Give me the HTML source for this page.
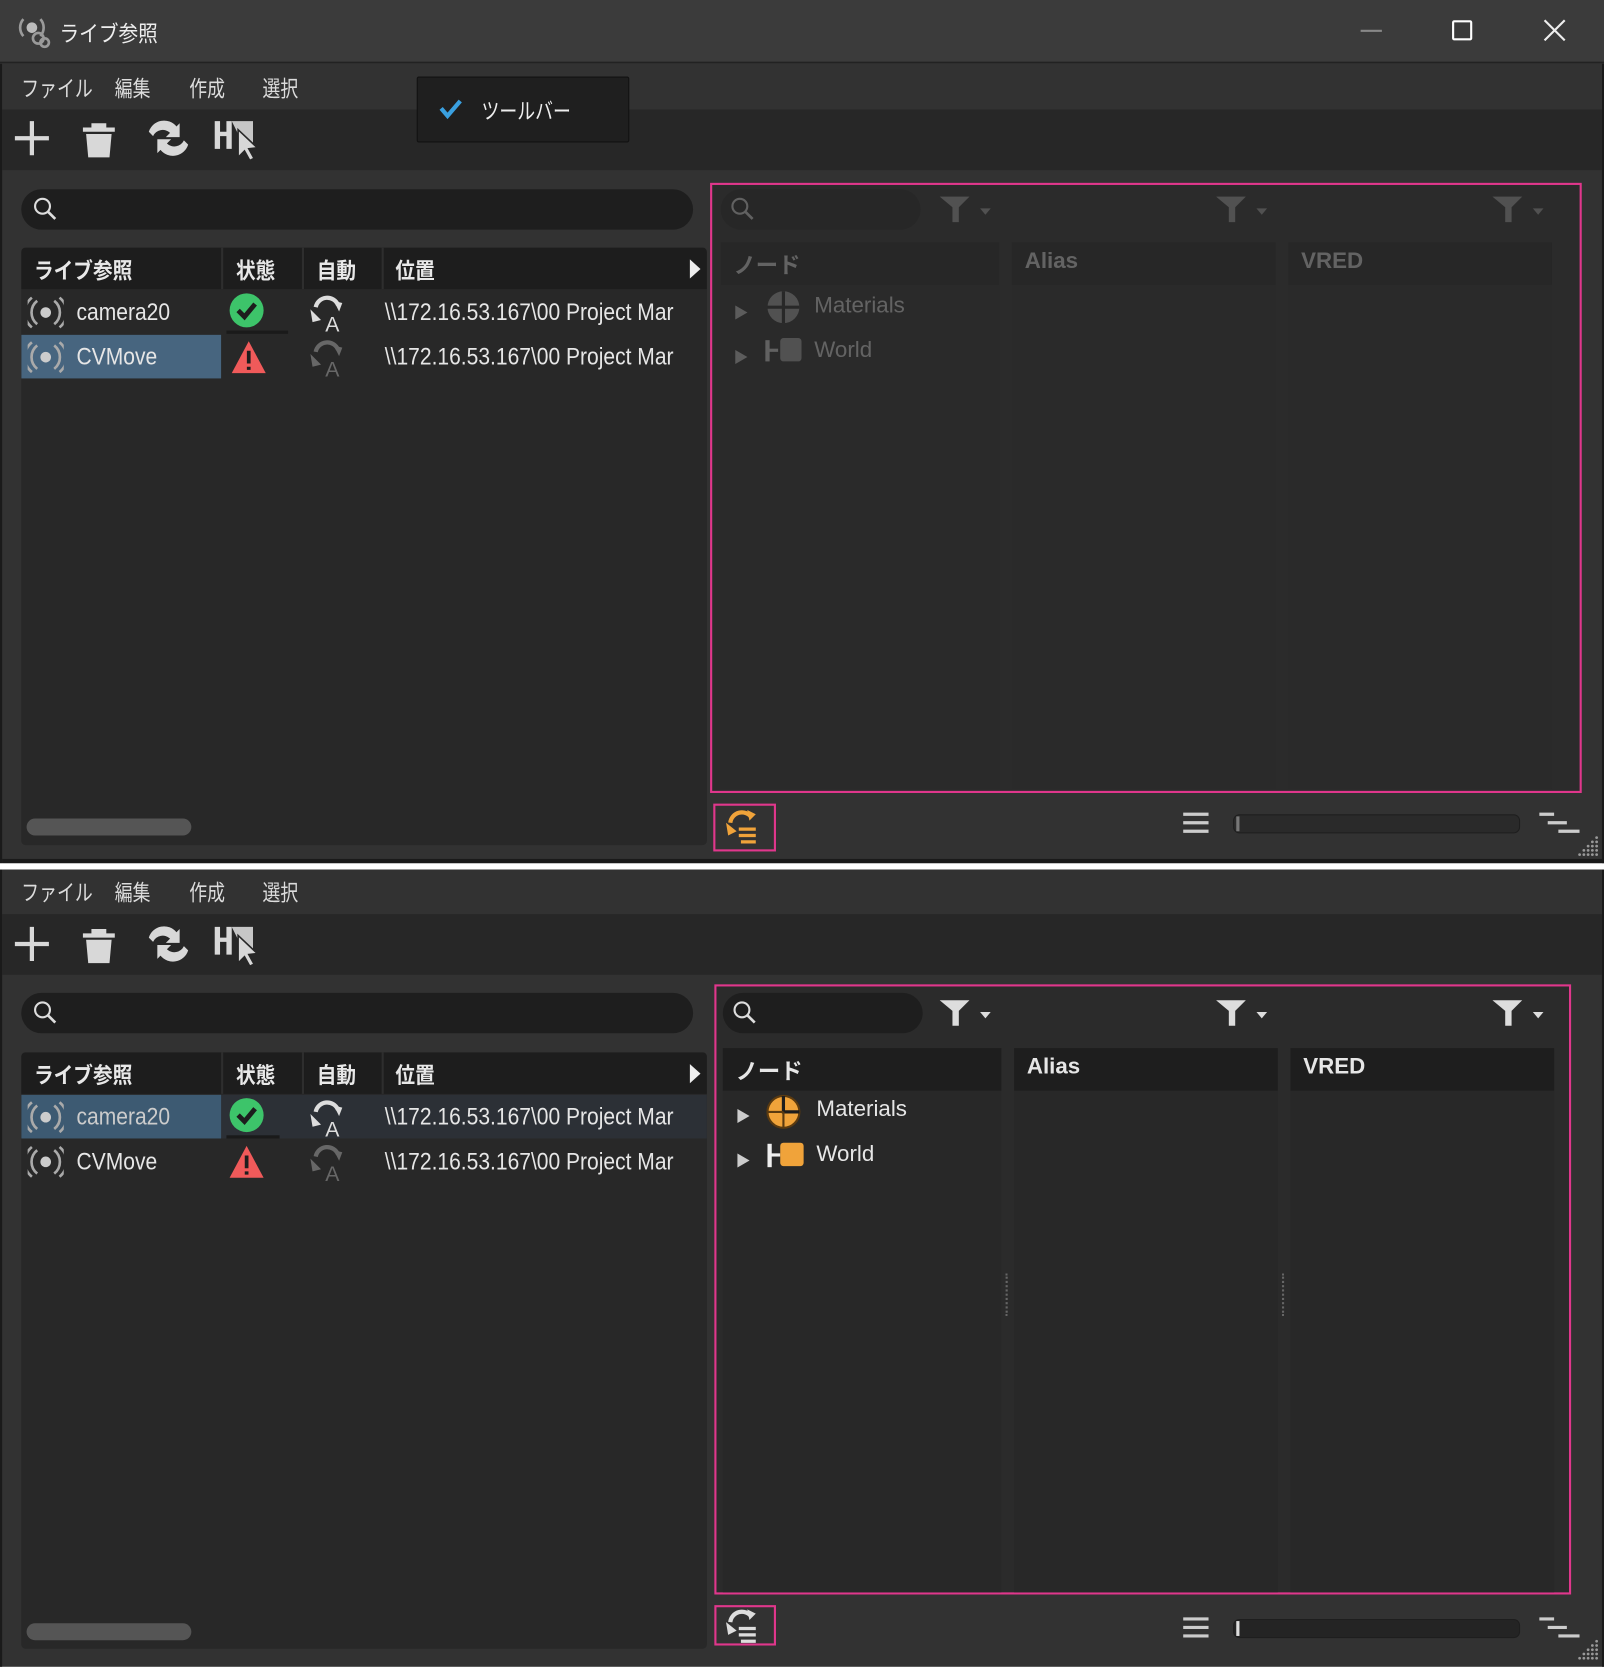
<!DOCTYPE html>
<html><head><meta charset="utf-8">
<style>
*{box-sizing:border-box;margin:0;padding:0}
html,body{width:1604px;height:1667px;overflow:hidden;background:#fff}
#s{position:absolute;left:0;top:0;width:1509px;height:1568px;transform:scale(1.063);transform-origin:0 0;font-family:"Liberation Sans","Noto Sans CJK JP",sans-serif;color:#e6e6e6;font-size:21px}
.a{position:absolute}
.win{position:absolute;left:0;width:1509px;background:#323232}
.menu{position:absolute;left:0;top:0;width:100%;height:43px;background:#323232}
.menu span{position:absolute;top:8px;font-size:21px;color:#dcdcdc;transform:scaleX(.8);transform-origin:0 0;white-space:nowrap}
.tool{position:absolute;left:0;top:43px;width:100%;height:57px;background:#272727}
.search{position:absolute;border-radius:19px;background:#1e1e1e}
.list{position:absolute;left:20px;top:173px;width:645px;height:562px;background:#282828;border-radius:4px;overflow:hidden}
.hdr{position:absolute;left:0;top:0;width:100%;height:39px;background:#1d1d1d}
.hdr span{position:absolute;top:6px;font-size:21px;font-weight:bold;color:#e8e8e8;transform:scaleX(.88);transform-origin:0 0;white-space:nowrap}
.hdr i{position:absolute;top:0;width:2px;height:39px;background:#2e2e2e}
.row{position:absolute;left:0;width:100%;height:41px}
.row .t{position:absolute;top:7px;font-size:23px;color:#e6e6e6;white-space:nowrap;transform:scaleX(.86);transform-origin:0 0}
.sb{position:absolute;left:5px;top:537px;width:155px;height:16px;border-radius:8px;background:#555}
.rb{position:absolute;border:2px solid #e0378c}
.col{position:absolute;background:#282828}
.ch{position:absolute;left:0;top:0;width:100%;height:40px;background:#1e1e1e;font-weight:bold;font-size:21px;padding:6px 0 0 12px}
</style></head><body><div id="s">

<div class="a" style="left:0;top:0;width:1509px;height:60px;background:#3b3b3b;border-bottom:2px solid #222"></div>
<svg class="a" style="left:16px;top:12px" width="32" height="34" viewBox="0 0 32 34"><g fill="none" stroke="#9a9a9a" stroke-width="2.5"><path d="M6 6a12 12 0 0 0 0 16"/><path d="M22 6a12 12 0 0 1 0 16"/><circle cx="20" cy="24" r="5"/><circle cx="26" cy="28" r="4"/></g><circle cx="14" cy="14" r="5" fill="#bbb"/></svg>
<div class="a" style="left:56px;top:16px;font-size:21px;color:#eee;transform:scaleX(.88);transform-origin:0 0">ライブ参照</div>
<div class="a" style="left:1280px;top:28px;width:20px;height:2px;background:#888"></div>
<div class="a" style="left:1366px;top:19px;width:19px;height:19px;border:2px solid #fff;border-radius:2px"></div>
<svg class="a" style="left:1452px;top:18px" width="21" height="21"><path d="M1 1L20 20M20 1L1 20" stroke="#eee" stroke-width="2"/></svg>

<!-- TOP WINDOW -->
<div class="win" style="top:60px;height:752px;border-left:2px solid #1a1a1a;border-right:2px solid #1a1a1a">
 <div class="menu"><span style="left:18px">ファイル</span><span style="left:106px">編集</span><span style="left:176px">作成</span><span style="left:245px">選択</span></div>
 <div class="tool"></div>
 <div class="search" style="left:18px;top:118px;width:632px;height:38px"></div>
 <svg class="a" style="left:28px;top:124px" width="26" height="26"><circle cx="10" cy="10" r="7" fill="none" stroke="#ddd" stroke-width="2"/><path d="M15 15L22 22" stroke="#ddd" stroke-width="2.5"/></svg>
 <div class="list" style="left:18px">
  <div class="hdr"><span style="left:12px">ライブ参照</span><i style="left:188px"></i><span style="left:202px">状態</span><i style="left:264px"></i><span style="left:278px">自動</span><i style="left:339px"></i><span style="left:352px">位置</span>
   <svg class="a" style="left:628px;top:10px" width="12" height="20"><path d="M1 1L11 10L1 19Z" fill="#eee"/></svg></div>
  <div class="row" style="top:40px">
   <svg class="a" style="left:6px;top:6px" width="34" height="30"><g fill="none" stroke="#aaa" stroke-width="2.5"><path d="M9 4a14 14 0 0 0 0 22M4 1a18 18 0 0 0 0 28"/><path d="M25 4a14 14 0 0 1 0 22M30 1a18 18 0 0 1 0 28"/></g><circle cx="17" cy="15" r="5" fill="#ccc"/></svg>
   <span class="t" style="left:52px">camera20</span>
   <svg class="a" style="left:195px;top:2px" width="34" height="34"><circle cx="17" cy="17" r="16" fill="#3dc46a"/><path d="M9 17L15 23L25 11" fill="none" stroke="#1d1d1d" stroke-width="4.5"/></svg>
   <div class="a" style="left:193px;top:38px;width:58px;height:3px;background:#1a1a1a"></div>
   <svg class="a" style="left:270px;top:2px" width="36" height="38"><path d="M7 14a11 11 0 0 1 21-2" fill="none" stroke="#ddd" stroke-width="4"/><path d="M24 8L32 10L29 18Z" fill="#ddd"/><path d="M2 16L12 26L4 28Z" fill="#ddd"/><text x="16" y="37" font-size="20" fill="#ddd" font-family="Liberation Sans">A</text></svg>
   <span class="t" style="left:342px">\\172.16.53.167\00 Project Mar</span>
  </div>
  <div class="row" style="top:82px">
   <div class="a" style="left:0;top:0;width:188px;height:41px;background:#47657f"></div>
   <svg class="a" style="left:6px;top:6px" width="34" height="30"><g fill="none" stroke="#aaa" stroke-width="2.5"><path d="M9 4a14 14 0 0 0 0 22M4 1a18 18 0 0 0 0 28"/><path d="M25 4a14 14 0 0 1 0 22M30 1a18 18 0 0 1 0 28"/></g><circle cx="17" cy="15" r="5" fill="#ccc"/></svg>
   <span class="t" style="left:52px">CVMove</span>
   <svg class="a" style="left:197px;top:4px" width="34" height="34"><path d="M17 2L33 32H1Z" fill="#f05a5a"/><path d="M17 11V23M17 26V29" stroke="#1d1d1d" stroke-width="3.5"/></svg>
   <svg class="a" style="left:270px;top:2px;opacity:.35" width="36" height="38"><path d="M7 14a11 11 0 0 1 21-2" fill="none" stroke="#ddd" stroke-width="4"/><path d="M24 8L32 10L29 18Z" fill="#ddd"/><path d="M2 16L12 26L4 28Z" fill="#ddd"/><text x="16" y="37" font-size="20" fill="#ddd" font-family="Liberation Sans">A</text></svg>
   <span class="t" style="left:342px">\\172.16.53.167\00 Project Mar</span>
  </div>
  <div class="sb"></div>
 </div>
 <div class="rb" style="left:666px;top:112px;width:820px;height:574px;background:#2b2b2b">
  <div style="position:absolute;inset:0;opacity:.3">
   <div class="search" style="left:8px;top:4px;width:188px;height:38px;background:#1e1e1e"></div>
   <svg class="a" style="left:16px;top:10px" width="26" height="26"><circle cx="10" cy="10" r="7" fill="none" stroke="#ddd" stroke-width="2"/><path d="M15 15L22 22" stroke="#ddd" stroke-width="2.5"/></svg>
   <svg class="a" style="left:214px;top:10px" width="52" height="26"><path d="M0 1H28L18 11V25H12V11Z" fill="#aaa"/><path d="M38 12H48L43 18Z" fill="#aaa"/></svg>
   <svg class="a" style="left:474px;top:10px" width="52" height="26"><path d="M0 1H28L18 11V25H12V11Z" fill="#aaa"/><path d="M38 12H48L43 18Z" fill="#aaa"/></svg>
   <svg class="a" style="left:734px;top:10px" width="52" height="26"><path d="M0 1H28L18 11V25H12V11Z" fill="#aaa"/><path d="M38 12H48L43 18Z" fill="#aaa"/></svg>
   <div class="col" style="left:8px;top:54px;width:262px;height:514px"><div class="ch">ノード</div>
    <div class="a" style="left:12px;top:56px;color:#ccc;font-size:14px">▶</div>
    <svg class="a" style="left:42px;top:44px" width="34" height="34"><circle cx="17" cy="17" r="15" fill="#aaa"/><path d="M17 2V32M2 17H32" stroke="#222" stroke-width="3"/></svg>
    <span class="a" style="left:88px;top:48px">Materials</span>
    <div class="a" style="left:12px;top:98px;color:#ccc;font-size:14px">▶</div>
    <div class="a" style="left:42px;top:92px;width:4px;height:20px;background:#ddd"></div><div class="a" style="left:44px;top:100px;width:10px;height:3px;background:#ddd"></div><div class="a" style="left:56px;top:90px;width:20px;height:22px;background:#aaa;border-radius:3px"></div>
    <span class="a" style="left:88px;top:90px">World</span></div>
   <div class="col" style="left:282px;top:54px;width:248px;height:514px"><div class="ch">Alias</div></div>
   <div class="col" style="left:542px;top:54px;width:248px;height:514px"><div class="ch">VRED</div></div>
  </div>
 </div>
 <div class="rb" style="left:669px;top:696px;width:59px;height:45px"></div>
 <svg class="a" style="left:679px;top:700px" width="36" height="34"><path d="M6 14a11 11 0 0 1 20-5" fill="none" stroke="#f0a33a" stroke-width="4"/><path d="M22 2L30 6L24 12Z" fill="#f0a33a"/><path d="M2 14L12 22L4 26Z" fill="#f0a33a"/><path d="M14 20H30M14 26H30M16 32H30" stroke="#f0a33a" stroke-width="3"/></svg>
 <svg class="a" style="left:1111px;top:704px" width="24" height="20"><path d="M0 2H24M0 10H24M0 18H24" stroke="#ccc" stroke-width="3"/></svg>
 <div class="a" style="left:1158px;top:706px;width:270px;height:18px;border-radius:6px;background:#2a2a2a;border:1px solid #1e1e1e"></div>
 <div class="a" style="left:1161px;top:708px;width:3px;height:14px;background:#777"></div>
 <svg class="a" style="left:1446px;top:704px" width="38" height="22"><path d="M0 2H14M8 10H26M18 18H38" stroke="#ccc" stroke-width="3"/></svg>
 <svg class="a" style="left:1480px;top:724px" width="24" height="24" fill="#999"><circle cx="20" cy="4" r="1.3"/><circle cx="16" cy="8" r="1.3"/><circle cx="20" cy="8" r="1.3"/><circle cx="12" cy="12" r="1.3"/><circle cx="16" cy="12" r="1.3"/><circle cx="20" cy="12" r="1.3"/><circle cx="8" cy="16" r="1.3"/><circle cx="12" cy="16" r="1.3"/><circle cx="16" cy="16" r="1.3"/><circle cx="20" cy="16" r="1.3"/><circle cx="4" cy="20" r="1.3"/><circle cx="8" cy="20" r="1.3"/><circle cx="12" cy="20" r="1.3"/><circle cx="16" cy="20" r="1.3"/><circle cx="20" cy="20" r="1.3"/></svg>
 <div class="a" style="left:0;top:748px;width:1509px;height:4px;background:#1a1a1a"></div>
</div>

<div class="a" style="left:392px;top:72px;width:200px;height:62px;background:#1f1f1f;border:1px solid #111;border-radius:2px"></div>
<svg class="a" style="left:413px;top:92px" width="22" height="20"><path d="M2 10L8 17L20 3" fill="none" stroke="#3aa0e0" stroke-width="4"/></svg>
<div class="a" style="left:453px;top:89px;font-size:21px;color:#eee;transform:scaleX(.8);transform-origin:0 0">ツールバー</div>

<!-- BOTTOM WINDOW -->
<div class="win" style="top:818px;height:750px;border-left:2px solid #1a1a1a;border-right:2px solid #1a1a1a">
 <div class="menu" style="height:42px"><span style="left:18px;top:6px">ファイル</span><span style="left:106px;top:6px">編集</span><span style="left:176px;top:6px">作成</span><span style="left:245px;top:6px">選択</span></div>
 <div class="tool" style="top:42px;height:57px"></div>
 <div class="search" style="left:18px;top:116px;width:632px;height:38px"></div>
 <svg class="a" style="left:28px;top:122px" width="26" height="26"><circle cx="10" cy="10" r="7" fill="none" stroke="#ddd" stroke-width="2"/><path d="M15 15L22 22" stroke="#ddd" stroke-width="2.5"/></svg>
 <div class="list" style="left:18px;top:172px;height:561px">
  <div class="hdr"><span style="left:12px">ライブ参照</span><i style="left:188px"></i><span style="left:202px">状態</span><i style="left:264px"></i><span style="left:278px">自動</span><i style="left:339px"></i><span style="left:352px">位置</span>
   <svg class="a" style="left:628px;top:10px" width="12" height="20"><path d="M1 1L11 10L1 19Z" fill="#eee"/></svg></div>
  <div class="row" style="top:40px;background:#2c3036">
   <div class="a" style="left:0;top:0;width:188px;height:41px;background:#3d5a72"></div>
   <svg class="a" style="left:6px;top:6px" width="34" height="30"><g fill="none" stroke="#aaa" stroke-width="2.5"><path d="M9 4a14 14 0 0 0 0 22M4 1a18 18 0 0 0 0 28"/><path d="M25 4a14 14 0 0 1 0 22M30 1a18 18 0 0 1 0 28"/></g><circle cx="17" cy="15" r="5" fill="#ccc"/></svg>
   <span class="t" style="left:52px;color:#ccc">camera20</span>
   <svg class="a" style="left:195px;top:2px" width="34" height="34"><circle cx="17" cy="17" r="16" fill="#3dc46a"/><path d="M9 17L15 23L25 11" fill="none" stroke="#1d1d1d" stroke-width="4.5"/></svg>
   <div class="a" style="left:193px;top:38px;width:50px;height:3px;background:#1a1a1a"></div>
   <svg class="a" style="left:270px;top:2px" width="36" height="38"><path d="M7 14a11 11 0 0 1 21-2" fill="none" stroke="#ddd" stroke-width="4"/><path d="M24 8L32 10L29 18Z" fill="#ddd"/><path d="M2 16L12 26L4 28Z" fill="#ddd"/><text x="16" y="37" font-size="20" fill="#ddd" font-family="Liberation Sans">A</text></svg>
   <span class="t" style="left:342px">\\172.16.53.167\00 Project Mar</span>
  </div>
  <div class="row" style="top:82px">
   <svg class="a" style="left:6px;top:6px" width="34" height="30"><g fill="none" stroke="#aaa" stroke-width="2.5"><path d="M9 4a14 14 0 0 0 0 22M4 1a18 18 0 0 0 0 28"/><path d="M25 4a14 14 0 0 1 0 22M30 1a18 18 0 0 1 0 28"/></g><circle cx="17" cy="15" r="5" fill="#ccc"/></svg>
   <span class="t" style="left:52px">CVMove</span>
   <svg class="a" style="left:195px;top:4px" width="34" height="34"><path d="M17 2L33 32H1Z" fill="#f05a5a"/><path d="M17 11V23M17 26V29" stroke="#1d1d1d" stroke-width="3.5"/></svg>
   <svg class="a" style="left:270px;top:2px;opacity:.35" width="36" height="38"><path d="M7 14a11 11 0 0 1 21-2" fill="none" stroke="#ddd" stroke-width="4"/><path d="M24 8L32 10L29 18Z" fill="#ddd"/><path d="M2 16L12 26L4 28Z" fill="#ddd"/><text x="16" y="37" font-size="20" fill="#ddd" font-family="Liberation Sans">A</text></svg>
   <span class="t" style="left:342px">\\172.16.53.167\00 Project Mar</span>
  </div>
  <div class="sb"></div>
 </div>
 <div class="rb" style="left:670px;top:108px;width:806px;height:574px;background:#2b2b2b">
   <div class="search" style="left:6px;top:6px;width:188px;height:38px;background:#1e1e1e"></div>
   <svg class="a" style="left:14px;top:12px" width="26" height="26"><circle cx="10" cy="10" r="7" fill="none" stroke="#ddd" stroke-width="2"/><path d="M15 15L22 22" stroke="#ddd" stroke-width="2.5"/></svg>
   <svg class="a" style="left:210px;top:12px" width="52" height="26"><path d="M0 1H28L18 11V25H12V11Z" fill="#ddd"/><path d="M38 12H48L43 18Z" fill="#ddd"/></svg>
   <svg class="a" style="left:470px;top:12px" width="52" height="26"><path d="M0 1H28L18 11V25H12V11Z" fill="#ddd"/><path d="M38 12H48L43 18Z" fill="#ddd"/></svg>
   <svg class="a" style="left:730px;top:12px" width="52" height="26"><path d="M0 1H28L18 11V25H12V11Z" fill="#ddd"/><path d="M38 12H48L43 18Z" fill="#ddd"/></svg>
   <div class="col" style="left:6px;top:58px;width:262px;height:512px"><div class="ch">ノード</div>
    <div class="a" style="left:12px;top:54px;color:#ccc;font-size:14px">▶</div>
    <svg class="a" style="left:40px;top:42px" width="34" height="36"><circle cx="17" cy="18" r="15" fill="#f0a33a" stroke="#5a3a10" stroke-width="2"/><path d="M17 3V18H32" fill="none" stroke="#1d1d1d" stroke-width="3"/><path d="M17 18V33M17 18H2" stroke="#5a3a10" stroke-width="2"/></svg>
    <span class="a" style="left:88px;top:46px">Materials</span>
    <div class="a" style="left:12px;top:96px;color:#ccc;font-size:14px">▶</div>
    <div class="a" style="left:42px;top:90px;width:4px;height:22px;background:#eee"></div><div class="a" style="left:44px;top:99px;width:10px;height:3px;background:#eee"></div><div class="a" style="left:54px;top:89px;width:22px;height:22px;background:#f0a33a;border-radius:3px"></div>
    <span class="a" style="left:88px;top:88px">World</span></div>
   <div class="col" style="left:280px;top:58px;width:248px;height:512px"><div class="ch">Alias</div></div>
   <div class="col" style="left:540px;top:58px;width:248px;height:512px"><div class="ch">VRED</div></div>
   <div class="a" style="left:272px;top:270px;width:2px;height:40px;border-left:2px dotted #666"></div>
   <div class="a" style="left:532px;top:270px;width:2px;height:40px;border-left:2px dotted #666"></div>
 </div>
 <div class="rb" style="left:670px;top:692px;width:58px;height:38px"></div>
 <svg class="a" style="left:679px;top:694px" width="36" height="34"><path d="M6 14a11 11 0 0 1 20-5" fill="none" stroke="#ddd" stroke-width="4"/><path d="M22 2L30 6L24 12Z" fill="#ddd"/><path d="M2 14L12 22L4 26Z" fill="#ddd"/><path d="M14 20H30M14 26H30M16 32H30" stroke="#ddd" stroke-width="3"/></svg>
 <svg class="a" style="left:1111px;top:703px" width="24" height="20"><path d="M0 2H24M0 10H24M0 18H24" stroke="#ccc" stroke-width="3"/></svg>
 <div class="a" style="left:1158px;top:705px;width:270px;height:18px;border-radius:6px;background:#242424;border:1px solid #1e1e1e"></div>
 <div class="a" style="left:1161px;top:707px;width:3px;height:14px;background:#ddd"></div>
 <svg class="a" style="left:1446px;top:703px" width="38" height="22"><path d="M0 2H14M8 10H26M18 18H38" stroke="#ccc" stroke-width="3"/></svg>
 <svg class="a" style="left:1480px;top:722px" width="24" height="24" fill="#999"><circle cx="20" cy="4" r="1.3"/><circle cx="16" cy="8" r="1.3"/><circle cx="20" cy="8" r="1.3"/><circle cx="12" cy="12" r="1.3"/><circle cx="16" cy="12" r="1.3"/><circle cx="20" cy="12" r="1.3"/><circle cx="8" cy="16" r="1.3"/><circle cx="12" cy="16" r="1.3"/><circle cx="16" cy="16" r="1.3"/><circle cx="20" cy="16" r="1.3"/><circle cx="4" cy="20" r="1.3"/><circle cx="8" cy="20" r="1.3"/><circle cx="12" cy="20" r="1.3"/><circle cx="16" cy="20" r="1.3"/><circle cx="20" cy="20" r="1.3"/></svg>
</div>

<svg class="a" style="left:12px;top:110px" width="240" height="44"><g fill="#d8d8d8"><path d="M16 4h4v14h14v4H20v14h-4V22H2v-4h14z"/><path d="M74 6h14v4h8v4H66v-4h8z"/><path d="M69 16h24l-2 22H71z"/><path d="M128 14a15 15 0 0 1 26-5l3-3v13h-13l4-4a10 10 0 0 0-16 3z"/><path d="M165 26a15 15 0 0 1-26 5l-3 3V21h13l-4 4a10 10 0 0 0 16-3z"/><path d="M190 4h5v10h6V4h5v26h-5V18h-6v12h-5z"/><path d="M206 4h20v24h-8z" opacity=".9"/><path d="M212 12l0 26 6-6 5 9 4-2-5-9 8-1z" stroke="#272727" stroke-width="1.5"/></g></svg>
<svg class="a" style="left:12px;top:868px" width="240" height="44"><g fill="#d8d8d8"><path d="M16 4h4v14h14v4H20v14h-4V22H2v-4h14z"/><path d="M74 6h14v4h8v4H66v-4h8z"/><path d="M69 16h24l-2 22H71z"/><path d="M128 14a15 15 0 0 1 26-5l3-3v13h-13l4-4a10 10 0 0 0-16 3z"/><path d="M165 26a15 15 0 0 1-26 5l-3 3V21h13l-4 4a10 10 0 0 0 16-3z"/><path d="M190 4h5v10h6V4h5v26h-5V18h-6v12h-5z"/><path d="M206 4h20v24h-8z" opacity=".9"/><path d="M212 12l0 26 6-6 5 9 4-2-5-9 8-1z" stroke="#272727" stroke-width="1.5"/></g></svg>

</div></body></html>
